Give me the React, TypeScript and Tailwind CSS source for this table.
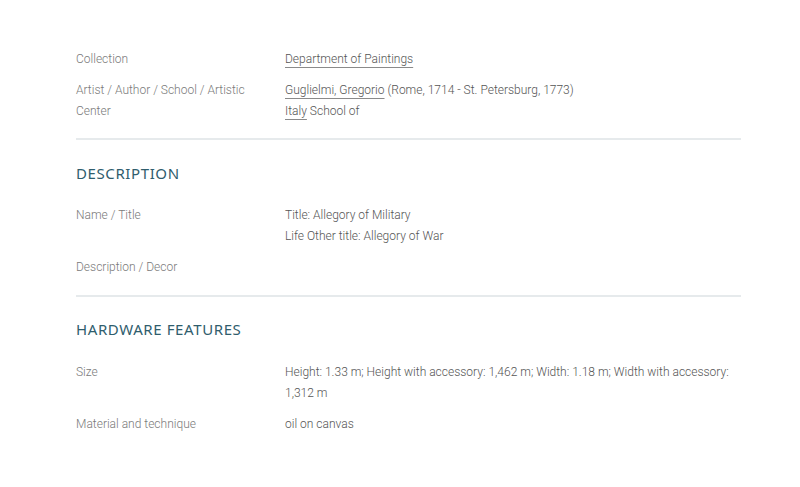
const rows1 = [
  {
    label: 'Collection',
    value: (
      <a className="underline decoration-[#8a8a8a] underline-offset-[4px] decoration-1">Department of Paintings</a>
    ),
  },
  {
    label: 'Artist / Author / School / Artistic Center',
    value: (
      <>
        <a className="underline decoration-[#8a8a8a] underline-offset-[4px] decoration-1">Guglielmi, Gregorio</a> (Rome, 1714 - St. Petersburg, 1773)
        <br />
        <a className="underline decoration-[#8a8a8a] underline-offset-[4px] decoration-1">Italy</a> School of
      </>
    ),
  },
];

const rows2 = [
  {
    label: 'Name / Title',
    value: (
      <>
        Title: Allegory of Military
        <br />
        Life Other title: Allegory of War
      </>
    ),
  },
  { label: 'Description / Decor', value: null },
];

const rows3 = [
  {
    label: 'Size',
    value: 'Height: 1.33 m; Height with accessory: 1,462 m; Width: 1.18 m; Width with accessory: 1,312 m',
  },
  { label: 'Material and technique', value: 'oil on canvas' },
];

const Row = ({ label, value }: { label: string; value: React.ReactNode }) => (
  <div className="flex">
    <div className="w-[209px] shrink-0 pr-6 text-[#7a7a7a]">{label}</div>
    <div className="flex-1 text-[#555555]">{value}</div>
  </div>
);

const Heading = ({ children }: { children: React.ReactNode }) => (
  <h2 className="text-[15px] leading-[20px] text-[#2f5d6d] tracking-[0.6px] font-['Noto_Sans',sans-serif] font-normal">
    {children}
  </h2>
);

export default function App() {
  return (
    <div className="w-[800px] h-[487px] bg-white font-['Roboto',sans-serif] font-light text-[12px] leading-[21px]">
      <div className="w-[665px] ml-[76px] pt-[49px]">
        <div className="flex flex-col gap-[10px]">
          {rows1.map((r) => (
            <Row key={r.label} {...r} />
          ))}
        </div>
        <div className="mt-[16px] h-[2px] bg-[#e6eaec]" />
        <div className="mt-[23px]">
          <Heading>DESCRIPTION</Heading>
        </div>
        <div className="mt-[22px] flex flex-col gap-[10px]">
          {rows2.map((r) => (
            <Row key={r.label} {...r} />
          ))}
        </div>
        <div className="mt-[17px] h-[2px] bg-[#e6eaec]" />
        <div className="mt-[22px]">
          <Heading>HARDWARE FEATURES</Heading>
        </div>
        <div className="mt-[23px] flex flex-col gap-[10px]">
          {rows3.map((r) => (
            <Row key={r.label} {...r} />
          ))}
        </div>
      </div>
    </div>
  );
}
